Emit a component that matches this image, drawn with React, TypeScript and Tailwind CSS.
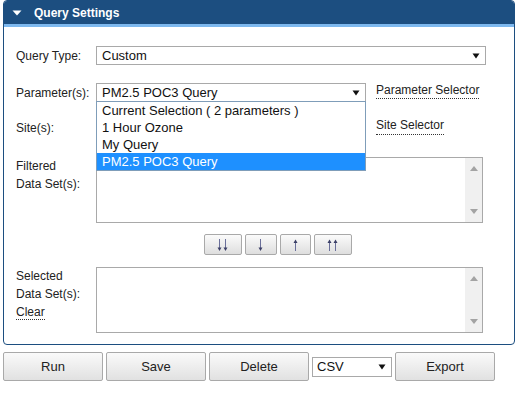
import React from 'react';

const font = { fontFamily: '"Liberation Sans", Arial, sans-serif' };

function Caret() {
  return (
    <svg width="8" height="6" viewBox="0 0 8 6" className="shrink-0">
      <path d="M0.5 0.5 L7.5 0.5 L4 5.5 Z" fill="#111" />
    </svg>
  );
}

function FakeSelect({ value, className }: { value: string; className: string }) {
  return (
    <div className={`h-[19px] border border-[#a9a9a9] bg-white flex items-center justify-between pl-[5px] pr-[5px] text-[13px] text-[#111] ${className}`}>
      <span className="leading-none">{value}</span>
      <Caret />
    </div>
  );
}

function Scroll() {
  return (
    <div className="w-[17px] h-full bg-[#f0f0f0] flex flex-col justify-between items-center py-[8px]">
      <svg width="8" height="5" viewBox="0 0 8 5">
        <path d="M0 5 L4 0 L8 5 Z" fill="#a3a3a3" />
      </svg>
      <svg width="8" height="5" viewBox="0 0 8 5">
        <path d="M0 0 L8 0 L4 5 Z" fill="#a3a3a3" />
      </svg>
    </div>
  );
}

function ListArea({ h }: { h: string }) {
  return (
    <div className={`w-[387px] ${h} border border-[#a9a9a9] bg-white flex justify-end`}>
      <Scroll />
    </div>
  );
}

function Arrow({ up, x }: { up?: boolean; x: number }) {
  return up ? (
    <g>
      <line x1={x} y1={2} x2={x} y2={12} stroke="#6a6f9a" strokeWidth="1" />
      <path d={`M${x - 2} 4 L${x} 0.5 L${x + 2} 4 Z`} fill="#3b3f66" />
    </g>
  ) : (
    <g>
      <line x1={x} y1={0} x2={x} y2={10} stroke="#6a6f9a" strokeWidth="1" />
      <path d={`M${x - 2} 8.5 L${x} 12 L${x + 2} 8.5 Z`} fill="#3b3f66" />
    </g>
  );
}

function MoveBtn({ w, up, two }: { w: string; up?: boolean; two?: boolean }) {
  return (
    <button className={`${w} h-[21px] border border-[#a9a9a9] rounded-[2px] bg-gradient-to-b from-[#fbfbfb] to-[#dedede] flex items-center justify-center`}>
      <svg width={two ? 12 : 6} height="12" viewBox={`0 0 ${two ? 12 : 6} 12`}>
        {two ? (
          <>
            <Arrow up={up} x={2.5} />
            <Arrow up={up} x={8.5} />
          </>
        ) : (
          <Arrow up={up} x={2.5} />
        )}
      </svg>
    </button>
  );
}

function BigBtn({ label }: { label: string }) {
  return (
    <button className="w-[100px] h-[29px] border border-[#a9a9a9] rounded-[2px] bg-gradient-to-b from-[#fafafa] to-[#e1e1e1] text-[13px] text-[#222]">
      {label}
    </button>
  );
}

export default function App() {
  const options = ['Current Selection ( 2 parameters )', '1 Hour Ozone', 'My Query', 'PM2.5 POC3 Query'];

  return (
    <div className="w-[520px] h-[394px] bg-white text-[#222]" style={font}>
      {/* Panel */}
      <div className="ml-[3px] w-[512px] border border-[#1c4e80] rounded-[4px] overflow-hidden">
        <div className="h-[23px] bg-[#1c4e80] flex items-center pl-[8px]">
          <svg width="10" height="6" viewBox="0 0 10 6">
            <path d="M0.5 0.5 L9.5 0.5 L5 5.5 Z" fill="#fff" />
          </svg>
          <span className="ml-[12px] text-[12px] font-bold text-white">Query Settings</span>
        </div>
        <div className="h-[3px] bg-[#7db8ee]" />

        <div className="pl-[12px] pt-[19px] pb-[11px] text-[12px]">
          {/* Query type */}
          <div className="flex items-center h-[19px]">
            <span className="w-[80px]">Query Type:</span>
            <FakeSelect value="Custom" className="w-[390px]" />
          </div>

          {/* Parameters */}
          <div className="flex items-center h-[19px] mt-[18px]">
            <span className="w-[80px]">Parameter(s):</span>
            <div className="relative">
              <FakeSelect value="PM2.5 POC3 Query" className="w-[270px]" />
              <div className="absolute left-0 top-[18px] z-10 w-[270px] border border-[#7f9db9] bg-white text-[13px] text-[#111]">
                {options.map((o, i) => (
                  <div
                    key={o}
                    className={`h-[17px] pl-[5px] flex items-center ${i === 3 ? 'bg-[#1e90ff] text-white' : ''}`}
                  >
                    {o}
                  </div>
                ))}
              </div>
            </div>
            <span className="ml-[10px] self-start border-b border-dotted border-[#333] leading-[14px] pb-[1px]">Parameter Selector</span>
          </div>

          {/* Sites */}
          <div className="flex items-center h-[19px] mt-[16px]">
            <span className="w-[80px]">Site(s):</span>
            <FakeSelect value="" className="w-[270px]" />
            <span className="ml-[10px] self-start border-b border-dotted border-[#333] leading-[14px] pb-[2px]">Site Selector</span>
          </div>

          {/* Filtered */}
          <div className="flex mt-[20px]">
            <div className="w-[80px] leading-[18px]">
              Filtered
              <br />
              Data Set(s):
            </div>
            <ListArea h="h-[66px]" />
          </div>

          {/* Move buttons */}
          <div className="flex gap-[3px] ml-[188px] mt-[11px]">
            <MoveBtn w="w-[38px]" two />
            <MoveBtn w="w-[32px]" />
            <MoveBtn w="w-[31px]" up />
            <MoveBtn w="w-[38px]" up two />
          </div>

          {/* Selected */}
          <div className="flex mt-[12px]">
            <div className="w-[80px] leading-[18px]">
              Selected
              <br />
              Data Set(s):
              <br />
              <span className="border-b border-dotted border-[#333]">Clear</span>
            </div>
            <ListArea h="h-[66px]" />
          </div>
        </div>
      </div>

      {/* Bottom bar */}
      <div className="flex items-center gap-[3px] ml-[3px] mt-[7px]">
        <BigBtn label="Run" />
        <BigBtn label="Save" />
        <BigBtn label="Delete" />
        <div className="w-[80px] h-[20px] border border-[#a9a9a9] bg-white flex items-center justify-between pl-[4px] pr-[5px] text-[13px] text-[#111]">
          <span>CSV</span>
          <Caret />
        </div>
        <BigBtn label="Export" />
      </div>
    </div>
  );
}
